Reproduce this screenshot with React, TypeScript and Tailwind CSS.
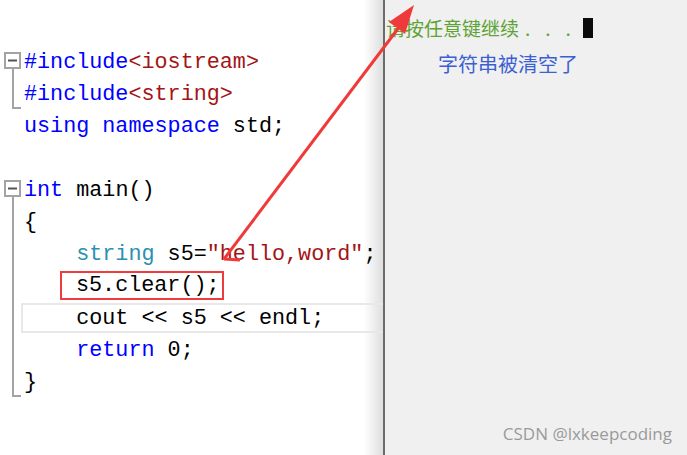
type Tok = [string, string];

const K = "text-[#0000ff]";
const S = "text-[#a31515]";
const T = "text-[#2b91af]";
const D = "text-black";

type Fold = "open" | "mid" | "end" | "none";

const lines: { fold: Fold; toks: Tok[] }[] = [
  { fold: "open", toks: [["#include", K], ["<iostream>", S]] },
  { fold: "end", toks: [["#include", K], ["<string>", S]] },
  { fold: "none", toks: [["using namespace", K], [" std;", D]] },
  { fold: "none", toks: [] },
  { fold: "open", toks: [["int", K], [" main()", D]] },
  { fold: "mid", toks: [["{", D]] },
  { fold: "mid", toks: [["    string", T], [" s5=", D], ["\"hello,word\"", S], [";", D]] },
  { fold: "mid", toks: [] },
  { fold: "mid", toks: [["    cout << s5 << endl;", D]] },
  { fold: "mid", toks: [["    return", K], [" 0;", D]] },
  { fold: "end", toks: [["}", D]] },
];

function Gutter({ fold }: { fold: Fold }) {
  return (
    <svg width="24" height="32" className="shrink-0">
      {fold === "open" && (
        <>
          <rect x="5" y="6" width="15" height="15" fill="white" stroke="#a3a3a3" strokeWidth="2" />
          <rect x="8" y="12.5" width="9" height="2" fill="#555" />
          <rect x="12" y="21" width="2" height="11" fill="#a3a3a3" />
        </>
      )}
      {fold === "mid" && <rect x="12" y="0" width="2" height="32" fill="#a3a3a3" />}
      {fold === "end" && (
        <>
          <rect x="12" y="0" width="2" height="30" fill="#a3a3a3" />
          <rect x="12" y="28" width="9" height="2" fill="#a3a3a3" />
        </>
      )}
    </svg>
  );
}

export default function App() {
  return (
    <div className="relative flex h-[455px] w-[687px] overflow-hidden bg-white">
      {/* code editor */}
      <div className="w-[383px] shrink-0 bg-gradient-to-r from-white from-[95%] to-[#dedede] pt-[47px] font-['Liberation_Mono',monospace] text-[21.75px]">
        {lines.map((l, i) => (
          <div key={i} className="flex h-8 items-center">
            <Gutter fold={l.fold} />
            {i === 7 ? (
              <span className="-mt-[3px] ml-[36px] inline-block h-[29px] border-2 border-[#ef3b3b] pl-[14px] pr-[2px] leading-[25px] text-black whitespace-pre">
                s5.clear();
              </span>
            ) : i === 8 ? (
              <div className="-ml-[3px] -mt-[2px] flex h-[30px] flex-1 items-center border-2 border-r-0 border-[#e8e8e8] pl-[1px] pt-[2px] whitespace-pre">
                {l.toks.map(([t, c], j) => (
                  <span key={j} className={c}>{t}</span>
                ))}
              </div>
            ) : (
              <div className="whitespace-pre leading-8">
                {l.toks.map(([t, c], j) => (
                  <span key={j} className={c}>{t}</span>
                ))}
              </div>
            )}
          </div>
        ))}
      </div>

      {/* console */}
      <div className="flex flex-1 flex-col border-l-2 border-[#6b6b6b] bg-[#f0f0f0] pl-[1px] font-['Noto_Sans_CJK_SC',sans-serif]">
        <div className="mt-[16px] flex items-center">
          <span className="text-[19px] leading-6 text-[#5fa334]">请按任意键继续</span>
          <span className="ml-[6px] text-[19px] leading-6 text-[#5fa334]">.</span>
          <span className="ml-[15px] text-[19px] leading-6 text-[#5fa334]">.</span>
          <span className="ml-[15px] text-[19px] leading-6 text-[#5fa334]">.</span>
          <span className="ml-[12px] inline-block h-[20px] w-[10px] bg-[#0c0c0c]" />
        </div>
        <div className="ml-[52px] mt-[10px] text-[20px] leading-7 text-[#3c5fd4]">字符串被清空了</div>
        <div className="mb-[9px] mt-auto self-end pr-[15px] font-['Open_Sans',sans-serif] text-[17px] text-[#9a9a9a]">
          CSDN @lxkeepcoding
        </div>
      </div>

      {/* annotation arrow */}
      <svg className="pointer-events-none absolute left-0 top-0" width="687" height="455">
        <line x1="224" y1="259" x2="400" y2="26" stroke="#f03a3a" strokeWidth="3" />
        <line x1="224" y1="259" x2="240" y2="260" stroke="#f03a3a" strokeWidth="3" />
        <polygon points="414,5 405,34 389,22" fill="#f03a3a" />
      </svg>
    </div>
  );
}
